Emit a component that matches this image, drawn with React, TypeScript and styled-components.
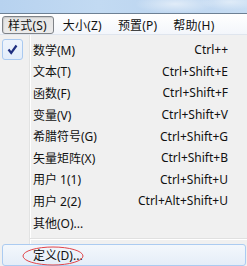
import React from 'react';
import styled, {createGlobalStyle} from 'styled-components';

const GlobalStyle = createGlobalStyle`
  html, body {
    margin: 0;
    padding: 0;
    background: #f0f0f0;
  }
  body {
    font-family: "Noto Sans", "Noto Sans CJK SC", sans-serif;
    font-size: 12px;
    color: #111;
  }
`;

const Window = styled.div`
  width: 247px;
  height: 266px;
  overflow: hidden;
  display: flex;
  flex-direction: column;
`;

const TitleStrip = styled.div`
  height: 13px;
  flex-shrink: 0;
  background:
    radial-gradient(ellipse 40px 10px at 175px 4px, rgba(255,255,255,0.55), transparent),
    radial-gradient(ellipse 30px 8px at 230px 2px, rgba(255,255,255,0.45), transparent),
    linear-gradient(to right, #b7d2ef 0%, #c2daf2 40%, #bcd5f0 70%, #c8ddf3 100%);
  border-bottom: 1px solid #6d8094;
`;

const MenuBar = styled.div`
  height: 21px;
  flex-shrink: 0;
  display: flex;
  align-items: flex-start;
  padding: 2px 0 0 2px;
  box-sizing: border-box;
  background: linear-gradient(#ffffff, #f3f6fb);
  border-bottom: 1px solid #dfe5ee;
  letter-spacing: 0.2px;
`;

const MenuBarItem = styled.div<{ $pressed?: boolean }>`
  height: 18px;
  box-sizing: border-box;
  display: flex;
  align-items: center;
  padding: 0 6px 0 5px;
  margin-right: 3px;
  border-radius: 3px;
  border: 1px solid ${p => (p.$pressed ? '#7f8388' : 'transparent')};
  background: ${p => (p.$pressed ? 'linear-gradient(#e4e4e4, #ececec)' : 'transparent')};
  box-shadow: ${p => (p.$pressed ? 'inset 1px 1px 1px rgba(0,0,0,0.12)' : 'none')};
  white-space: nowrap;
`;

const Panel = styled.div`
  position: relative;
  flex: 1;
  padding-top: 4px;
  background: linear-gradient(
    to right,
    #f0f0f0 0 29px,
    #e2e3e3 29px 30px,
    #ffffff 30px 31px,
    #f0f0f0 31px
  );
`;

const Row = styled.div`
  height: 21.6px;
  display: grid;
  grid-template-columns: 33px 1fr auto;
  align-items: center;
  padding-right: 19px;
  white-space: nowrap;
`;

const Gutter = styled.div`
  display: flex;
  align-items: center;
  padding-left: 2px;
`;

const CheckBox = styled.div`
  width: 21px;
  height: 21px;
  box-sizing: border-box;
  border: 1px solid #a9c9f0;
  border-radius: 3px;
  background: linear-gradient(#eef4fc, #e3edfa);
  display: flex;
  align-items: center;
  justify-content: center;
`;

const Shortcut = styled.span`
  text-align: right;
`;

const Separator = styled.div`
  height: 11px;
  display: flex;
  align-items: center;
  padding-left: 30px;

  &::after {
    content: '';
    flex: 1;
    height: 1px;
    border-bottom: 1px solid #ffffff;
    background: #e0e0e0;
  }
`;

const HotRow = styled.div`
  margin: 0 1px 0 2px;
  height: 22px;
  box-sizing: border-box;
  border: 1px solid #abcbf1;
  border-radius: 3px;
  background: linear-gradient(#f3f7fc, #e5edf8);
  display: flex;
  align-items: center;
  padding-left: 30px;
`;

const Annotation = styled.svg`
  position: absolute;
  left: 22px;
  top: 210px;
  pointer-events: none;
`;

const items: [string, string][] = [
    ['数学(M)', 'Ctrl++'],
    ['文本(T)', 'Ctrl+Shift+E'],
    ['函数(F)', 'Ctrl+Shift+F'],
    ['变量(V)', 'Ctrl+Shift+V'],
    ['希腊符号(G)', 'Ctrl+Shift+G'],
    ['矢量矩阵(X)', 'Ctrl+Shift+B'],
    ['用户 1(1)', 'Ctrl+Shift+U'],
    ['用户 2(2)', 'Ctrl+Alt+Shift+U'],
    ['其他(O)...', ''],
];

const App = () => {
    return (
        <>
            <GlobalStyle />
            <Window>
                <TitleStrip />
                <MenuBar>
                    <MenuBarItem $pressed>样式(S)</MenuBarItem>
                    <MenuBarItem>大小(Z)</MenuBarItem>
                    <MenuBarItem>预置(P)</MenuBarItem>
                    <MenuBarItem>帮助(H)</MenuBarItem>
                </MenuBar>
                <Panel>
                    {items.map(([label, keys], i) => (
                        <Row key={label}>
                            <Gutter>
                                {i === 0 && (
                                    <CheckBox>
                                        <svg width="13" height="13" viewBox="0 0 13 13">
                                            <path d="M2.5 6.5 L5.2 10 L10.5 2.5" fill="none" stroke="#1f2f80" strokeWidth="2.2" strokeLinejoin="miter" />
                                        </svg>
                                    </CheckBox>
                                )}
                            </Gutter>
                            <span>{label}</span>
                            <Shortcut>{keys}</Shortcut>
                        </Row>
                    ))}
                    <Separator />
                    <HotRow>定义(D)...</HotRow>
                    {/* red circle marking the item */}
                    <Annotation width="64" height="22" viewBox="0 0 64 22">
                        <ellipse cx="31" cy="11" rx="30" ry="9" fill="none" stroke="#e2454a" strokeWidth="1" />
                    </Annotation>
                </Panel>
            </Window>
        </>
    );
};

export default App;
